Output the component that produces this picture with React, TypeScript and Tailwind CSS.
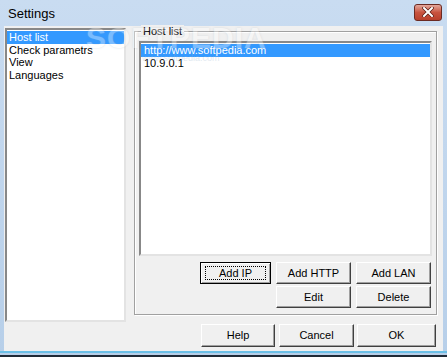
import React from 'react';

const font = { fontFamily: '"Liberation Sans", Arial, sans-serif' };

const Btn: React.FC<{ label: string; w: string; focused?: boolean }> = ({ label, w, focused }) => (
  <div
    className={`${w} h-[22px] bg-[#f0f0f0] flex items-center justify-center text-[11px] text-black ${
      focused
        ? 'border border-black shadow-[inset_1px_1px_0_#ffffff,inset_-1px_-1px_0_#a0a0a0]'
        : 'border border-t-white border-l-white border-r-[#404040] border-b-[#404040] shadow-[inset_-1px_-1px_0_#a0a0a0]'
    }`}
  >
    {focused ? (
      <span className="w-[calc(100%-8px)] h-[14px] border border-dotted border-black flex items-center justify-center leading-none">
        {label}
      </span>
    ) : (
      label
    )}
  </div>
);

const sideItems = ['Host list', 'Check parametrs', 'View', 'Languages'];
const hosts = ['http://www.softpedia.com', '10.9.0.1'];

export default function App() {
  return (
    <div style={font} className="relative w-[447px] h-[357px] flex flex-col bg-gradient-to-b from-[#c9dcf1] to-[#b7cfe9] overflow-hidden select-none">
      {/* title bar */}
      <div className="h-[26px] flex items-center justify-between pl-[8px] pr-[5px]">
        <span className="text-[13px] text-black pt-[1px]">Settings</span>
        <div className="w-[28px] h-[17px] mt-[-2px] rounded-[3px] border border-[#6b2a22] bg-gradient-to-b from-[#e3a79c] via-[#c8533f] to-[#b8402c] flex items-center justify-center">
          <svg width="12" height="10" viewBox="0 0 12 10">
            <path d="M2 1 L10 9 M10 1 L2 9" stroke="#5a1c14" strokeWidth="3.4" strokeLinecap="square" />
            <path d="M2 1 L10 9 M10 1 L2 9" stroke="#ffffff" strokeWidth="2" strokeLinecap="square" />
          </svg>
        </div>
      </div>

      {/* client area */}
      <div className="mx-[4px] flex-1 bg-[#f0f0f0] flex flex-col pt-[2px] pl-[1px]">
        <div className="flex h-[294px]">
          {/* side list */}
          <div className="w-[121px] h-full bg-white border-2 border-t-[#888888] border-l-[#888888] border-b-[#e3e3e3] border-r-[#e3e3e3] pt-[1px] text-[11px] leading-[12.5px]">
            {sideItems.map((s, i) => (
              <div key={s} className={`pl-[2px] ${i === 0 ? 'bg-[#3399ff] text-white' : 'text-black'}`}>
                {s}
              </div>
            ))}
          </div>

          {/* group box */}
          <div className="ml-[8px] w-[303px] mt-[3px] h-[284px] relative border border-[#a0a0a0] shadow-[1px_1px_0_#ffffff,inset_1px_1px_0_#ffffff] flex flex-col px-[4px]">
            <span className="absolute -top-[7px] left-[6px] bg-[#f0f0f0] px-[2px] text-[11px] leading-[12px] text-black">Host list</span>
            <div className="mt-[9px] h-[215px] bg-white border-2 border-t-[#888888] border-l-[#888888] border-b-[#e3e3e3] border-r-[#e3e3e3] pt-[1px] text-[11px] leading-[13px]">
              {hosts.map((h, i) => (
                <div key={h} className={`pl-[3px] ${i === 0 ? 'bg-[#3399ff] text-white' : 'text-black'}`}>
                  {h}
                </div>
              ))}
            </div>
            <div className="mt-[6px] flex justify-end gap-[5px] pr-[1px]">
              <Btn label="Add IP" w="w-[71px]" focused />
              <Btn label="Add HTTP" w="w-[75px]" />
              <Btn label="Add LAN" w="w-[75px]" />
            </div>
            <div className="mt-[2px] flex justify-end gap-[5px] pr-[1px]">
              <Btn label="Edit" w="w-[75px]" />
              <Btn label="Delete" w="w-[75px]" />
            </div>
          </div>
        </div>

        <div className="mt-[2px] flex justify-end pr-[7px]">
          <Btn label="Help" w="w-[74px] !h-[23px]" />
          <div className="w-[4px]" />
          <Btn label="Cancel" w="w-[75px] !h-[23px]" />
          <div className="w-[3px]" />
          <Btn label="OK" w="w-[79px] !h-[23px]" />
        </div>
      </div>

      {/* bottom frame */}
      <div className="h-[6px] border-b-2 border-[#1f2a36] bg-[#b7cfe9] shadow-[inset_0_2px_0_#6bbfe6]" />

      {/* watermark */}
      <div className="absolute left-[86px] top-[15px] text-[30px] font-bold tracking-[1px] text-white opacity-35 [text-shadow:0_0_2px_#9aa8b6] pointer-events-none">
        SOFTPEDIA
      </div>
      <div className="absolute left-[142px] top-[52px] text-[9px] text-[#9db6cf] opacity-30 pointer-events-none">
        www.softpedia.com
      </div>
    </div>
  );
}
